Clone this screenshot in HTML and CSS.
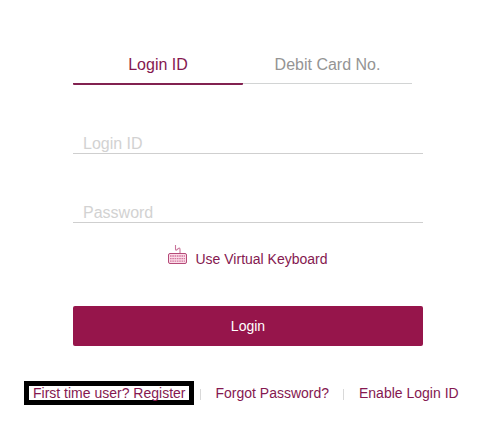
FILE: index.html
```html
<!DOCTYPE html>
<html lang="en">
<head>
<meta charset="utf-8">
<title>Login</title>
<link rel="stylesheet" href="styles.css">
</head>
<body>
<main class="login">
  <nav class="tabs">
    <a class="tab active">Login ID</a>
    <a class="tab">Debit Card No.</a>
  </nav>
  <form class="form">
    <input class="field" type="text" placeholder="Login ID">
    <input class="field" type="password" placeholder="Password">
    <a class="keyboard">
      <svg class="keyboard-icon" width="20" height="20" viewBox="0 0 20 20" fill="none">
        <path d="M7.5 0V4.2q.3 1.6 1.6.4l1.3-1.2q1.6-1 1.6 1V8" stroke="#c9749a" stroke-width="1.1"/>
        <rect x=".5" y="8.5" width="18" height="10" rx="1.5" fill="#fbdce8" stroke="#b54a78"/>
        <path d="M2 11h15M2 13.6h15M2 16.2h15" stroke="#d4789f" stroke-width="1.3" stroke-dasharray="1.6 .7"/>
      </svg>
      <span>Use Virtual Keyboard</span>
    </a>
    <button class="submit" type="button">Login</button>
  </form>
  <footer class="links">
    <a class="register">First time user? Register</a>
    <i class="divider"></i>
    <a class="forgot">Forgot Password?</a>
    <i class="divider"></i>
    <a class="enable">Enable Login ID</a>
  </footer>
</main>
</body>
</html>
```
FILE: styles.css
```css
* { box-sizing: border-box; }
body {
  margin: 0;
  background: #fff;
  color: #851850;
  font: 14px/16px "Liberation Sans", Arial, sans-serif;
}
.login { padding-top: 45px; }
.tabs {
  display: flex;
  width: 339px;
  height: 40px;
  margin-left: 73px;
}
.tab {
  flex: 0 0 169px;
  height: 39px;
  border-bottom: 1px solid #d2d4d4;
  color: #949494;
  font-size: 16px;
  line-height: 40px;
  text-align: center;
}
.tab.active {
  flex-basis: 170px;
  height: 40px;
  border-bottom: 2px solid #822150;
  border-radius: 1px;
  color: #851850;
}
.form {
  display: flex;
  flex-direction: column;
  width: 350px;
  margin: 38px 0 0 73px;
}
.field {
  height: 31px;
  margin-bottom: 38px;
  padding: 12px 10px 0;
  border: 0;
  border-bottom: 1px solid #cfcfcf;
  border-radius: 0;
  outline: 0;
  background: transparent;
  font: 16px/18px "Liberation Sans", Arial, sans-serif;
}
.field::placeholder { color: #d2d2d2; opacity: 1; }
.field + .field { margin-bottom: 22px; }
.keyboard {
  display: flex;
  align-items: center;
  height: 20px;
  margin-left: 95px;
  gap: 7.5px;
}
.keyboard span { padding-top: 7px; }
.submit {
  height: 40px;
  margin-top: 41px;
  padding: 0;
  border: 0;
  border-radius: 2px;
  background: #96154b;
  color: #fff;
  font: 14px "Liberation Sans", Arial, sans-serif;
}
.links {
  display: flex;
  align-items: center;
  margin: 35px 0 0 24px;
  white-space: nowrap;
}
.register {
  width: 170px;
  height: 24px;
  padding-left: 4px;
  border: 5px solid #000;
  line-height: 14px;
}
.divider {
  width: 1px;
  height: 11px;
  margin: 2px 15px 0 6px;
  background: #d9d9d9;
}
.forgot { width: 121px; text-indent: -0.5px; }
```
